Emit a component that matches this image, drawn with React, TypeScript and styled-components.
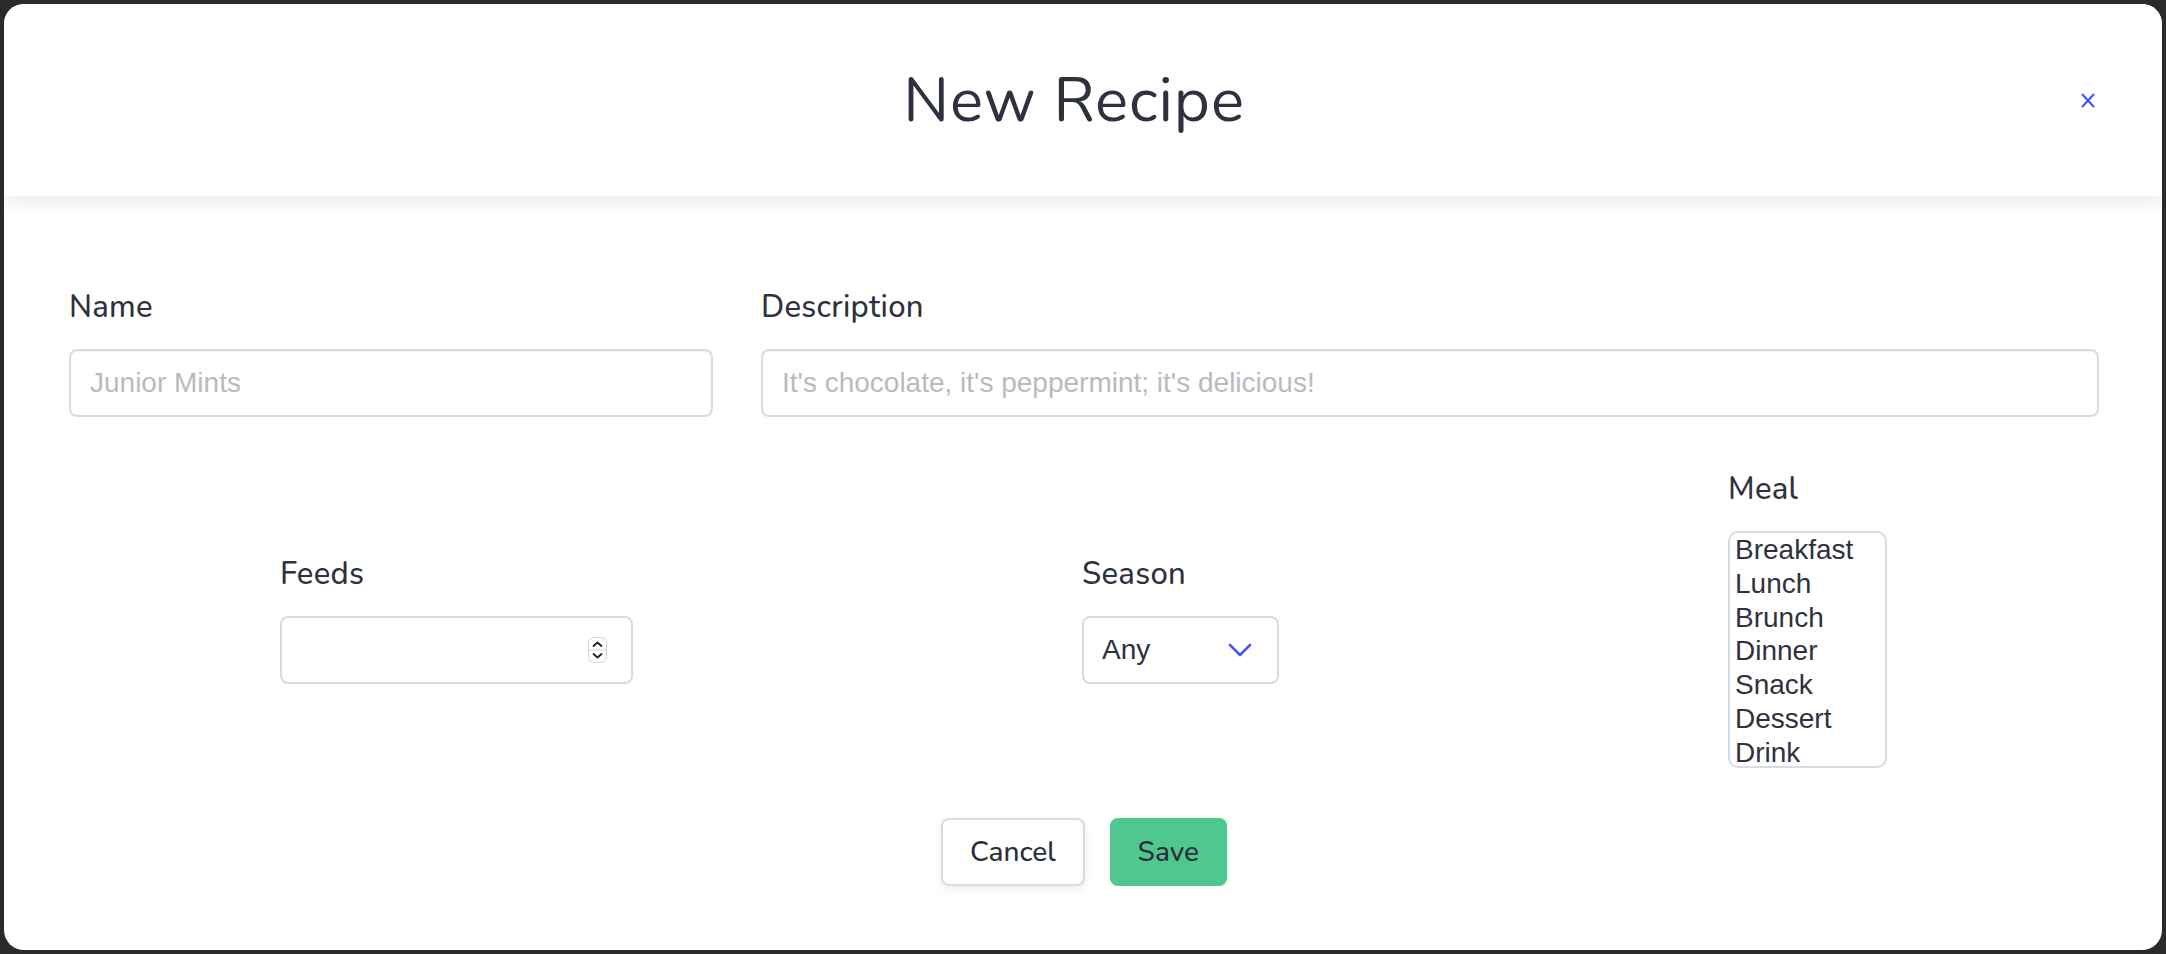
import styled, { createGlobalStyle } from "styled-components";

const GlobalStyle = createGlobalStyle`
  html, body {
    margin: 0;
    padding: 0;
    background: #2a2a2c;
  }
  * {
    box-sizing: border-box;
  }
`;

const Page = styled.div`
  width: 2166px;
  height: 954px;
  padding: 4px 4px 4px 4px;
  display: flex;
`;

const Card = styled.div`
  flex: 1;
  display: flex;
  flex-direction: column;
  background: #ffffff;
  border-radius: 20px;
  overflow: hidden;
  font-family: "Nunito", "Lato", sans-serif;
  color: #2e323e;
`;

const Header = styled.header`
  height: 192px;
  flex-shrink: 0;
  display: flex;
  align-items: center;
  padding: 0 65px;
  background: #ffffff;
  box-shadow: 0 8px 18px rgba(0, 0, 0, 0.07);
  position: relative;
  z-index: 1;
`;

const Title = styled.h1`
  flex: 1;
  margin: 0;
  text-align: center;
  font-size: 62px;
  font-weight: 400;
  letter-spacing: 0.9px;
  color: #2e323e;
`;

const CloseButton = styled.button`
  width: 18px;
  height: 18px;
  padding: 0;
  border: none;
  background: none;
  display: flex;
  align-items: center;
  justify-content: center;
  color: #3b55ff;
  cursor: pointer;
`;

const Body = styled.form`
  flex: 1;
  display: flex;
  flex-direction: column;
  padding: 93px 63px 0 65px;
`;

const TopRow = styled.div`
  display: flex;
  gap: 48px;
`;

const MiddleRow = styled.div`
  display: flex;
  align-items: center;
  justify-content: space-between;
  margin-top: 54px;
  padding: 0 212px 0 211px;
`;

const Field = styled.div<{ $width?: number }>`
  display: flex;
  flex-direction: column;
  gap: 24px;
  ${(p) => (p.$width ? `width: ${p.$width}px;` : "flex: 1;")}
`;

const Label = styled.label`
  font-size: 31px;
  line-height: 36px;
  font-weight: 500;
  letter-spacing: 0.3px;
  color: #2e323e;
`;

const TextInput = styled.input`
  width: 100%;
  height: 68px;
  padding: 0 19px;
  border: 2px solid #d8dbe1;
  border-radius: 8px;
  box-shadow: inset 0 1px 2px rgba(0, 0, 0, 0.05);
  font-family: "Liberation Sans", Arial, sans-serif;
  font-size: 28px;
  color: #2e323e;
  outline: none;
  &::placeholder {
    color: #b9babf;
  }
`;

const BoxShell = styled.div`
  height: 68px;
  display: flex;
  align-items: center;
  border: 2px solid #d8dbe1;
  border-radius: 8px;
  background: #fff;
`;

const NumberShell = styled(BoxShell)`
  padding: 0 24px 0 19px;
`;

const BareInput = styled.input`
  flex: 1;
  min-width: 0;
  border: none;
  outline: none;
  background: transparent;
  font-family: "Liberation Sans", Arial, sans-serif;
  font-size: 28px;
  color: #2e323e;
  padding: 0;
  -moz-appearance: textfield;
  &::-webkit-inner-spin-button,
  &::-webkit-outer-spin-button {
    -webkit-appearance: none;
    margin: 0;
  }
`;

const SelectShell = styled(BoxShell)`
  padding: 0 25px 0 18px;
`;

const BareSelect = styled.select`
  flex: 1;
  appearance: none;
  -webkit-appearance: none;
  border: none;
  outline: none;
  background: transparent;
  font-family: "Liberation Sans", Arial, sans-serif;
  font-size: 28px;
  color: #2e323e;
  padding: 0;
`;

const ListBox = styled.div`
  height: 237px;
  border: 2px solid #d8dbe1;
  border-radius: 10px;
  overflow: hidden;
  padding: 0 5px;
`;

const ListOption = styled.div`
  font-family: "Liberation Sans", Arial, sans-serif;
  font-size: 28px;
  line-height: 33.8px;
  color: #2e323e;
`;

const Actions = styled.div`
  display: flex;
  justify-content: center;
  gap: 25px;
  margin-top: 50px;
`;

const Button = styled.button<{ $primary?: boolean }>`
  height: 68px;
  padding: 0 ${(p) => (p.$primary ? 28 : 27)}px;
  border-radius: 8px;
  font-family: "Nunito", "Lato", sans-serif;
  font-size: 28px;
  font-weight: 500;
  color: #2a2f3a;
  cursor: pointer;
  border: ${(p) => (p.$primary ? "none" : "2px solid #d8dbe1")};
  background: ${(p) => (p.$primary ? "#4fc890" : "#ffffff")};
  box-shadow: ${(p) => (p.$primary ? "none" : "0 3px 8px rgba(0, 0, 0, 0.08)")};
`;

const meals = ["Breakfast", "Lunch", "Brunch", "Dinner", "Snack", "Dessert", "Drink"];

function Spinner() {
  return (
    <svg width="19" height="26" viewBox="0 0 19 26">
      <rect x="0.5" y="0.5" width="18" height="25" rx="5" fill="#fff" stroke="#d4d4d6" />
      <line x1="1" y1="13" x2="18" y2="13" stroke="#d4d4d6" />
      <path d="M5.5 9 L9.5 5.5 L13.5 9" fill="none" stroke="#222" strokeWidth="1.8" strokeLinecap="round" strokeLinejoin="round" />
      <path d="M5.5 17 L9.5 20.5 L13.5 17" fill="none" stroke="#222" strokeWidth="1.8" strokeLinecap="round" strokeLinejoin="round" />
    </svg>
  );
}

function Chevron() {
  return (
    <svg width="24" height="14" viewBox="0 0 24 14">
      <path d="M2 2 L12 12 L22 2" fill="none" stroke="#4559f5" strokeWidth="2.6" strokeLinecap="round" strokeLinejoin="round" />
    </svg>
  );
}

export default function App() {
  return (
    <>
      <GlobalStyle />
      <Page>
        <Card>
          <Header>
            <Title>New Recipe</Title>
            <CloseButton type="button" aria-label="Close">
              <svg width="14" height="15" viewBox="0 0 14 15">
                <path d="M1 1 L13 14 M13 1 L1 14" stroke="currentColor" strokeWidth="2" />
              </svg>
            </CloseButton>
          </Header>
          <Body onSubmit={(e) => e.preventDefault()}>
            <TopRow>
              <Field $width={644}>
                <Label htmlFor="name">Name</Label>
                <TextInput id="name" placeholder="Junior Mints" />
              </Field>
              <Field>
                <Label htmlFor="description">Description</Label>
                <TextInput
                  id="description"
                  placeholder="It's chocolate, it's peppermint; it's delicious!"
                />
              </Field>
            </TopRow>
            <MiddleRow>
              <Field $width={353}>
                <Label htmlFor="feeds">Feeds</Label>
                <NumberShell>
                  <BareInput id="feeds" type="number" />
                  <Spinner />
                </NumberShell>
              </Field>
              <Field $width={197}>
                <Label htmlFor="season">Season</Label>
                <SelectShell>
                  <BareSelect id="season" defaultValue="any">
                    <option value="any">Any</option>
                    <option value="spring">Spring</option>
                    <option value="summer">Summer</option>
                    <option value="fall">Fall</option>
                    <option value="winter">Winter</option>
                  </BareSelect>
                  <Chevron />
                </SelectShell>
              </Field>
              <Field $width={159}>
                <Label>Meal</Label>
                <ListBox role="listbox">
                  {meals.map((m) => (
                    <ListOption key={m} role="option">
                      {m}
                    </ListOption>
                  ))}
                </ListBox>
              </Field>
            </MiddleRow>
            <Actions>
              <Button type="button">Cancel</Button>
              <Button type="submit" $primary>
                Save
              </Button>
            </Actions>
          </Body>
        </Card>
      </Page>
    </>
  );
}
